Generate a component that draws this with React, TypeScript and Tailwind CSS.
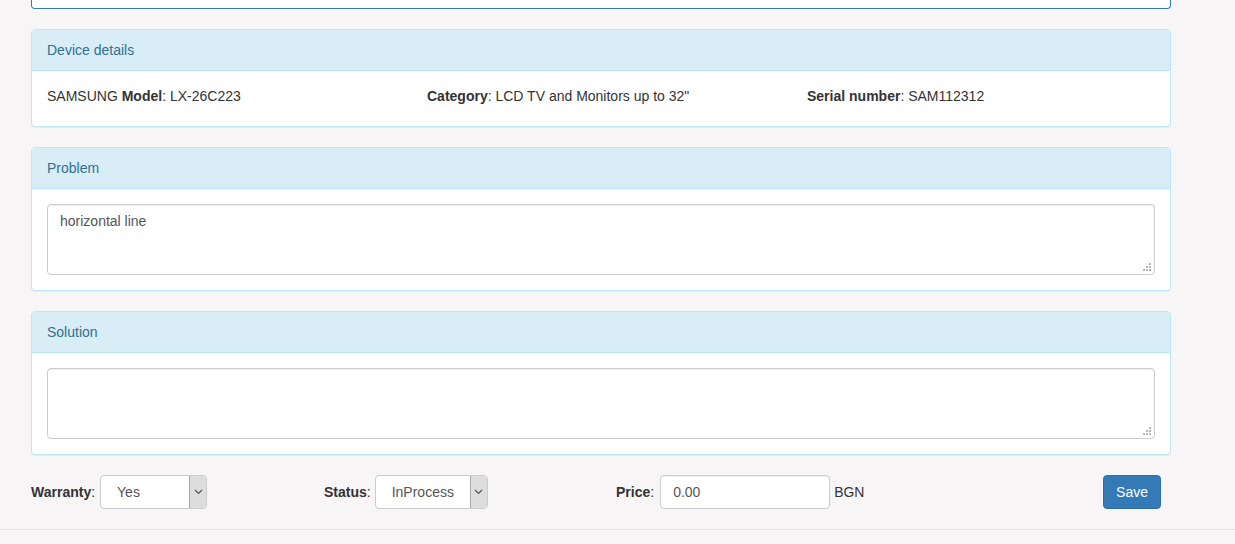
// Repair order - device details form
const font = { fontFamily: '"Liberation Sans", Arial, sans-serif' };

function Panel({ title, children, bodyClass = 'p-[15px]' }: { title: string; children: React.ReactNode; bodyClass?: string }) {
  return (
    <div className="mb-[20px] rounded-[4px] border border-[#bce8f1] bg-white shadow-[0_1px_1px_rgba(0,0,0,0.05)]">
      <div className="rounded-t-[3px] border-b border-[#bce8f1] bg-[#d9edf7] px-[15px] py-[10px] leading-[20px] text-[#31708f]">
        {title}
      </div>
      <div className={bodyClass}>{children}</div>
    </div>
  );
}

function TextArea({ value }: { value: string }) {
  return (
    <div className="relative h-[71px] rounded-[4px] border border-[#ccc] bg-white px-[12px] py-[6px] leading-[20px] text-[#555] shadow-[inset_0_1px_1px_rgba(0,0,0,0.075)]">
      {value}
      {/* 크기 조절 손잡이 */}
      <svg className="absolute bottom-[3px] right-[3px]" width="8" height="8" viewBox="0 0 8 8" fill="#b5b5b5">
        <rect x="6" y="0" width="2" height="2" />
        <rect x="3" y="3" width="2" height="2" />
        <rect x="6" y="3" width="2" height="2" />
        <rect x="0" y="6" width="2" height="2" />
        <rect x="3" y="6" width="2" height="2" />
        <rect x="6" y="6" width="2" height="2" />
      </svg>
    </div>
  );
}

function Select({ value, width }: { value: string; width: string }) {
  return (
    <div className={`flex h-[34px] ${width} overflow-hidden rounded-[4px] border border-[#ccc] bg-white`}>
      <div className="flex flex-1 items-center pl-[16px] text-[#555]">{value}</div>
      <div className="flex w-[17px] items-center justify-center border-l border-[#a9a9a9] bg-[#dddddd]">
        <svg width="9" height="6" viewBox="0 0 9 6" fill="none" stroke="#555" strokeWidth="1.2">
          <path d="M1 1l3.5 3.5L8 1" />
        </svg>
      </div>
    </div>
  );
}

export default function App() {
  return (
    <div className="min-h-[544px] bg-[#f7f5f6] text-[14px] text-[#333]" style={font}>
      <div className="ml-[31px] w-[1140px]">
        <div className="mb-[20px] h-[9px] rounded-b-[4px] border border-t-0 border-[#337ab7] bg-white" />

        <Panel title="Device details" bodyClass="px-[15px] pt-[15px] pb-[20px]">
          <div className="grid grid-cols-[380px_380px_1fr] leading-[20px]">
            <div>
              SAMSUNG <b>Model</b>: LX-26C223
            </div>
            <div>
              <b>Category</b>: LCD TV and Monitors up to 32"
            </div>
            <div>
              <b>Serial number</b>: SAM112312
            </div>
          </div>
        </Panel>

        <Panel title="Problem">
          <TextArea value="horizontal line" />
        </Panel>

        <Panel title="Solution">
          <TextArea value="" />
        </Panel>

        {/* 하단 필드 */}
        <div className="flex h-[34px] items-center">
          <div className="flex w-[293px] items-center">
            <span className="mr-[5px]">
              <b>Warranty</b>:
            </span>
            <Select value="Yes" width="w-[107px]" />
          </div>
          <div className="flex w-[292px] items-center">
            <span className="mr-[4px]">
              <b>Status</b>:
            </span>
            <Select value="InProcess" width="w-[113px]" />
          </div>
          <div className="flex flex-1 items-center">
            <span className="mr-[6px]">
              <b>Price</b>:
            </span>
            <div className="flex h-[34px] w-[170px] items-center rounded-[4px] border border-[#ccc] bg-white px-[12px] text-[#555] shadow-[inset_0_1px_1px_rgba(0,0,0,0.075)]">
              0.00
            </div>
            <span className="ml-[4px]">BGN</span>
            <button className="ml-auto mr-[10px] h-[34px] rounded-[4px] border border-[#2e6da4] bg-[#337ab7] px-[12px] text-white">
              Save
            </button>
          </div>
        </div>
      </div>
      <div className="mt-[20px] border-t border-[#e8e6e7]" />
    </div>
  );
}
